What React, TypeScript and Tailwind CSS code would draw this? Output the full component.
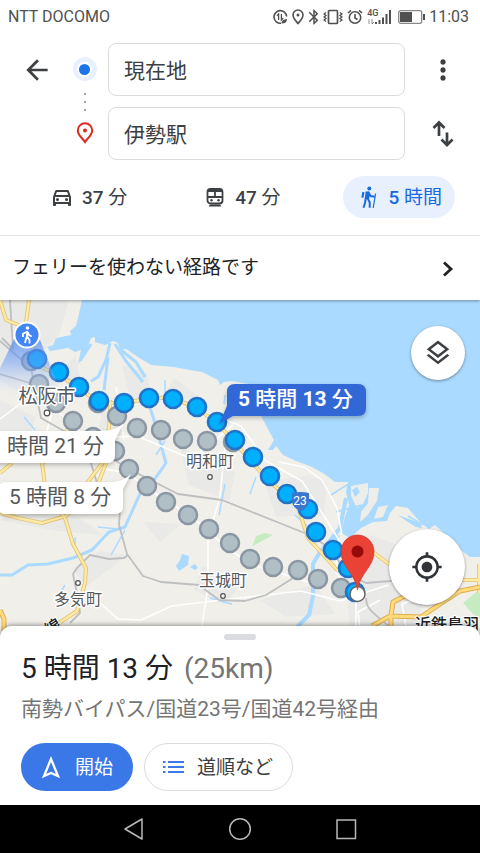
import type { ReactNode } from "react";
import { MdArrowBack, MdBluetooth, MdMoreVert, MdMyLocation, MdOutlineDirectionsCar, MdOutlineLayers } from "react-icons/md";

type Point = [number, number];

const mainRoute: Point[] = [
  [37, 359], [59, 372], [79, 387], [99, 401], [124, 403], [149, 398], [173, 399], [197, 407], [217, 422],
  [235, 440], [253, 457], [270, 476], [287, 494], [308, 509], [316, 532], [333, 550], [348, 568], [355, 592],
];

const otherRoutes: Point[] = [
  [31, 361], [39, 384], [56, 403], [73, 421], [93, 437], [98, 403], [117, 416], [137, 428], [161, 430], [183, 439],
  [207, 441], [233, 442], [115, 451], [129, 469], [147, 486], [166, 502], [188, 515], [209, 529], [230, 543],
  [250, 559], [273, 567], [298, 570], [318, 579], [341, 588],
];

function StatusBar() {
  return (
    <div className="flex h-8 items-center justify-between pl-2 pr-[11px] pt-px text-[#505050]">
      <span className="text-[16px] leading-5">NTT DOCOMO</span>
      <div className="flex items-center">
        <svg className="mr-1 h-4 w-[15px]" viewBox="0 0 15 16" fill="none" stroke="currentColor" strokeWidth="1.6">
          <path d="M13.6 7.5A6.3 6.3 0 1 0 8 14.2" />
          <path d="M5.600 11V5L4 6.600M8.400 5v6l1.700-1.700" strokeWidth="1.300" />
          <path d="M8.500 14.500c0-3 2-4 5.500-4.500 0 3-2 4.500-5.500 4.500z" fill="currentColor" stroke="none" />
        </svg>
        <svg className="mr-px h-4 w-3" viewBox="0 0 12 16" fill="none" stroke="currentColor" strokeWidth="1.600">
          <path d="M6 14.500C3.500 11.500 1 9 1 6a5 5 0 0 1 10 0c0 3-2.500 5.500-5 8.500z" />
          <circle cx="6" cy="6" r="1.500" fill="currentColor" stroke="none" />
        </svg>
        <MdBluetooth className="size-[18px]" />
        <svg className="mr-1 h-4 w-5" viewBox="0 0 20 16" fill="none" stroke="currentColor">
          <rect x="5.500" y="1.500" width="9" height="13" rx="1" strokeWidth="1.700" />
          <path d="M3 3.500L1 5l2 1.500L1 8l2 1.500L1 11l2 1.500M17 3.500L19 5l-2 1.500L19 8l-2 1.500 2 1.500-2 1.500" strokeWidth="1.300" />
        </svg>
        <svg className="mr-1 h-4 w-4" viewBox="0 0 16 16" fill="none" stroke="currentColor" strokeWidth="1.600">
          <circle cx="8" cy="8.500" r="5.700" />
          <path d="M8 5v4l2.500 1.500M1 4l3-2.700M15 4l-3-2.700" />
        </svg>
        <span className="relative mr-[7px] block h-4 w-6">
          <span className="absolute left-0 top-0 text-[9px] font-medium leading-[8px]">4G</span>
          <svg className="h-4 w-6" viewBox="0 0 24 16" stroke="currentColor" strokeWidth="2">
            <path d="M9 15v-2M12.500 15v-4M16 15V8.500M19.500 15V5M23 15V1" />
            <path d="M2 10v5M5 10v5l2-2" strokeWidth="1" fill="none" opacity=".6" />
          </svg>
        </span>
        <svg className="mr-1 h-[14px] w-[27px]" viewBox="0 0 27 14">
          <rect x=".7" y=".7" width="23" height="12.600" rx="2" fill="none" stroke="#888" strokeWidth="1.300" />
          <rect x="2" y="2" width="12" height="10" fill="currentColor" />
          <rect x="25" y="4" width="2" height="6" fill="currentColor" />
        </svg>
        <span className="text-[16px] leading-5">11:03</span>
      </div>
    </div>
  );
}

function TrainIcon() {
  return (
    <svg className="size-6" viewBox="0 0 24 24" fill="none" stroke="currentColor" strokeWidth="1.800">
      <rect x="4.500" y="4" width="15" height="14.500" rx="3" />
      <path d="M4.500 6C6.500 2.300 17.500 2.300 19.500 6v1h-15zM7 19.500h10l1.500 2h-13z" fill="currentColor" stroke="none" />
      <path d="M5 12h14M12 6v6" />
      <circle cx="8.500" cy="15.200" r="1.200" fill="currentColor" stroke="none" />
      <circle cx="15.500" cy="15.200" r="1.200" fill="currentColor" stroke="none" />
    </svg>
  );
}

function HikerIcon() {
  return (
    <svg className="size-6" viewBox="0 0 24 24" fill="none" stroke="currentColor" strokeWidth="2">
      <circle cx="13.300" cy="3.400" r="2" fill="currentColor" stroke="none" />
      <path d="M6.300 7l2.200.3-1 5.500-2.200-.4zM9.700 6.500l3.300-.2 1 3-1 5-4.300-.3z" fill="currentColor" stroke="none" />
      <path d="M12.500 7.500l2 3.500 4.300.800M9.800 13l-.8 5-1.500 4.800M11.500 13l2.200 4.200v5.600" />
      <path d="M19.600 8.500L17.200 23" strokeWidth="1.200" />
    </svg>
  );
}

function ModeButton({ icon, value, unit, active = false }: { icon: ReactNode; value: string; unit: string; active?: boolean }) {
  return (
    <button
      type="button"
      aria-pressed={active}
      className={`flex h-[42px] items-center gap-2 whitespace-pre rounded-full px-[13px] text-[19px] leading-6 ${active ? "bg-[#e8f0fe] text-[#1a6ae0]" : "text-[#3c4043]"}`}
    >
      {icon}
      <span className="pt-[2px]"><span className="font-medium">{value}</span> {unit}</span>
    </button>
  );
}

function Header() {
  const field = "h-[53px] w-full rounded-lg border border-[#dadce0] bg-white px-[15px] pb-[2px] text-[21px] text-[#3c4043] outline-none";
  return (
    <header className="relative z-10 bg-white shadow-[0_1px_3px_rgba(0,0,0,0.35)]">
      <StatusBar />
      <div className="flex pl-[13px] pt-[11px]">
        <button type="button" aria-label="戻る" className="flex h-[53px] w-12 shrink-0 items-center justify-center text-[#3c4043]">
          <MdArrowBack className="size-8" />
        </button>
        <div className="flex h-[117px] w-[47px] shrink-0 flex-col items-center justify-between pb-4 pt-[14px]">
          <span className="flex size-6 items-center justify-center rounded-full bg-[#e8f0fe]">
            <span className="size-[15px] rounded-full border-2 border-white bg-[#1a73e8]" />
          </span>
          <span className="flex flex-col gap-[6px]">
            <span className="size-[2px] rounded-full bg-[#80868b]" />
            <span className="size-[2px] rounded-full bg-[#80868b]" />
            <span className="size-[2px] rounded-full bg-[#80868b]" />
          </span>
          <svg className="h-[22px] w-[18px]" viewBox="0 0 18 22" fill="none" stroke="#df2920" strokeWidth="2">
            <path d="M9 20C7 16.500 1.800 13.500 1.800 8.500a7.200 7.200 0 0 1 14.400 0C16.200 13.500 11 16.500 9 20z" />
            <circle cx="9" cy="8.500" r="2" fill="#df2920" stroke="none" />
          </svg>
        </div>
        <div className="flex min-w-0 flex-1 flex-col gap-[11px]">
          <input aria-label="出発地" defaultValue="現在地" className={field} />
          <input aria-label="目的地" defaultValue="伊勢駅" className={field} />
        </div>
        <div className="flex w-[75px] shrink-0 flex-col items-center gap-[11px] text-[#3c4043]">
          <button type="button" aria-label="メニュー" className="flex h-[53px] items-center"><MdMoreVert className="size-8" /></button>
          <button type="button" aria-label="入れ替え" className="flex h-[53px] items-center">
            <svg className="size-7" viewBox="0 0 28 28" fill="none" stroke="currentColor" strokeWidth="2.700">
              <path d="M10 16V3M4.500 8L10 2.500 15.500 8M18 12.500V25M12.500 19.500L18 25l5.500-5.500" />
            </svg>
          </button>
        </div>
      </div>
      <div className="flex items-center justify-between border-b border-[#e4e5e7] pb-[17px] pl-[37px] pr-[25px] pt-4">
        <ModeButton icon={<MdOutlineDirectionsCar className="size-6" />} value="37" unit="分" />
        <ModeButton icon={<TrainIcon />} value="47" unit="分" />
        <ModeButton icon={<HikerIcon />} value="5" unit="時間" active />
      </div>
      <button type="button" className="flex h-16 w-full items-center justify-between pl-3 pr-[26px] pt-px text-left text-[19px] text-[#202124]">
        フェリーを使わない経路です
        <svg className="h-4 w-3" viewBox="0 0 12 16" fill="none" stroke="currentColor" strokeWidth="2.800"><path d="M2 1.500L9 8l-7 6.500" /></svg>
      </button>
    </header>
  );
}

function MapDrawing() {
  return (
    <svg className="absolute inset-0 h-full w-full" viewBox="0 300 480 338" preserveAspectRatio="xMidYMin slice" role="img" aria-label="地図">
      <defs>
        <linearGradient id="beam" x1="0" y1="0" x2="0" y2="1">
          <stop offset="0" stopColor="#4285f4" stopOpacity=".75" />
          <stop offset=".45" stopColor="#6c9df5" stopOpacity=".5" />
          <stop offset="1" stopColor="#dfe8fa" stopOpacity="0" />
        </linearGradient>
        <filter id="shade" x="-10%" y="-20%" width="120%" height="160%">
          <feDropShadow dx="0" dy="2" stdDeviation="2" floodOpacity=".25" />
        </filter>
      </defs>
      <rect y="300" width="480" height="338" fill="#aadaff" />
      <path
        fill="#f0efea"
        d="M0 300H82L79 314 76 326 70 331 71 335 56 338 53 345 47 347 50 351 68 348 75 352 81 350 78 364 85 354 91 338 95 337 95 342 105 345 113 341 118 343 120 350 126 349 138 357 151 365 174 367 190 370 202 372 218 380 220 385 224 382 232 381 248 384 261 416 269 431 274 440 268 450 273 450 276 446 283 455 296 461 310 466 323 473 335 482 348 482 346 492 349 505 344 520 341 533 350 538 361 528 373 522 387 521 390 513 396 506 408 508 420 522 429 529 435 525 448 537 461 550 470 557 480 557V638H0z"
      />
      <g fill="#ededea">
        <path d="M351 486L368 483 368 493 363 504 357 508 351 496z" />
        <path d="M369 488L379 488 377 501 367 516 360 522 361 512 368 503z" />
        <path d="M378 507L388 505 383 517 374 519z" />
      </g>
      <path fill="#aadaff" d="M352 490l5-3 3 5-5 5zM398 515l22 8 2 5-6-1-8-5zM393 498l3 2-1 2zM180 560l2-6 7 2-1 9-6 4-3 2-3-5zM190 567l5-3 3 4-3 2z" />
      <g fill="#e7e7e7" opacity=".75">
        <path d="M0 300h69l-10 35-21 20-6 45-32-20zM61 368l15-12 4 22-12 16zM122 365l25 8 4 25-20 4zM174 378l31 23-41-4zM104 402l22 12-10 22-17-8zM0 520l48-25 55 40-46-4zM73 570l27-19 28 4-41 31zM180 447l55 25-6 29-40-16zM264 481l45-5 9 38-42 3zM309 475l18 8-3 34-9-3zM345 550l27-15 52 20-4 80h-70zM143 522l38 2-21 18zM202 566l38 19-16 20-30-15zM0 400l35 17-9 35H0zM260 600l55-16 20 30-49 3z" />
      </g>
      <path fill="#c5ecc0" d="M252 547l4-11 9-3 8 2-11 6-11 6zM463 603l17-14v29l-7-4z" />
      <g fill="none" stroke="#aadaff" strokeLinejoin="round">
        <path d="M110 343L106 360 98 377 91 381M108 357L104 390M91 344L80 361M115 344L126 361 143 382M121 350L136 362 145 377M147 398L158 433 162 449 166 463 154 480 143 487 125 527 109 532 92 550 73 558 48 564 28 565 12 575 0 575" strokeWidth="3" />
        <path d="M346 498l-6 30-12 15-8 9-7 12 0 32-4 19-12 12M338 535l-8 13" strokeWidth="4" />
        <path d="M165 380v17M24 417L35 430M225 484l-6 31M256 477l-6 17M165 441l-9 14M98 527l20 2M125 530l-14 25M75 545v-8M65 585l-5 8M350 483l-19 12M361 505l-25 7M408 516l15 9M295 515l20 18M210 598l22 6M225 395l-1 9" strokeWidth="1.500" />
      </g>
      <g fill="none" stroke="#fff" strokeWidth="1.500" strokeLinejoin="round">
        <path d="M0 419l20-15 26-3 40 36M39 390l14 18-9 34M90 438l47-2 55 23 41-34M98 468l31 5 17 15 28 17 28 20 26 24 25 16 30 9 40 13M116 387l8 52M197 409l44 17 25 35 36 20 37 59-3 33 18 20M225 447l-5 49-12 44 0 47-8 51M100 603l18 16 23 1 31-14 50-6 43-5 36-4 39 10 48-16M279 462l25 5 18 13 15 28 5 27M356 591v46M380 600l-22 12 3 25M408 638l-6-34 29-11" />
      </g>
      <g fill="none" stroke="#bebfc0" strokeWidth="1.800" strokeLinejoin="round">
        <path d="M10 300l3 49L2 338M0 341l31 27 10 50 60 34 30 18 47 24 44 6 55 22 35 14 20 14 14 23 20 10 24-2 45-7M90 460l7 23M120 510l-1 15 8 29 16 22 18 6 38 3 20 15 26 1 21-6 24-15 14-10M128 555l-4 3-15 1-19-4-13 13-4 6 6 30 1 9-10 10M0 374l40 12M366 598c0 15 15 18 28 34l8 4" />
      </g>
      <g fill="none" strokeLinejoin="round">
        <g stroke="#e2c477" strokeWidth="4">
          <path d="M29 300l-4 30 16 37 22 10 38 27 25-2 42-5 28 10 23 18 47 53 32 29 10 31 30 33M0 300l6 20 23 9M110 400v18l-4 35M76 418l-18 25-15 20M103 462l-22 29M42 463l4 30 19 25 8 26 13 24-1 15-8 28-27 18M0 513l18 5 24 5 24-7 30-27 10-26M0 473l12-10M373 552l20 15 9 4 16 9h62M479 564v29" />
        </g>
        <g stroke="#ffeaa5" strokeWidth="2.300">
          <path d="M29 300l-4 30 16 37 22 10 38 27 25-2 42-5 28 10 23 18 47 53 32 29 10 31 30 33M0 300l6 20 23 9M110 400v18l-4 35M76 418l-18 25-15 20M103 462l-22 29M42 463l4 30 19 25 8 26 13 24-1 15-8 28-27 18M0 513l18 5 24 5 24-7 30-27 10-26M0 473l12-10M373 552l20 15 9 4 16 9h62M479 564v29" />
        </g>
        <path d="M0 610l4 9 0 19M372 626l18-10 31 1 19-13 20-13 20-4M391 637v-22l2-13 20-10" stroke="#e1ad53" strokeWidth="5" />
        <path d="M0 610l4 9 0 19M372 626l18-10 31 1 19-13 20-13 20-4M391 637v-22l2-13 20-10" stroke="#ffdb79" strokeWidth="3" />
      </g>
      <g fill="#b0bec5" stroke="#8b96a3" strokeWidth="2.500">
        {otherRoutes.map(([x, y]) => <circle key={`${x}-${y}`} cx={x} cy={y} r="9" />)}
      </g>
      <g fill="#00b0ff" stroke="#2173c7" strokeWidth="2.700">
        {mainRoute.map(([x, y]) => <circle key={`${x}-${y}`} cx={x} cy={y} r="9" />)}
      </g>
      <path d="M292 493q8-2 17 0v9q-1 6-8 9-8-3-9-9z" fill="#3b77cc" />
      <text x="300" y="505" textAnchor="middle" fontSize="12" fill="#fff">23</text>

      <path d="M16 335L-8 385Q28 410 58 385L38 335z" fill="url(#beam)" />
      <circle cx="27" cy="335" r="12.500" fill="#4285f4" stroke="#fff" strokeWidth="2" />
      <g fill="none" stroke="#fff" strokeWidth="2" strokeLinejoin="round">
        <circle cx="27.500" cy="328" r="1.800" fill="#fff" stroke="none" />
        <path d="M27 331v6.500M26.500 332l-3.500 1.800V337M27.500 332l1.500 3 2.800 1.500M26.500 337L25 343M27.500 337l2 3v3.500" strokeWidth="1.800" />
      </g>

      <g fill="#55585b" stroke="#fff" strokeWidth="3" strokeLinejoin="round" paintOrder="stroke" textAnchor="middle">
        <text x="47" y="403" fontSize="19">松阪市</text>
        <g fontSize="16">
          <text x="210" y="467">明和町</text>
          <text x="223" y="586">玉城町</text>
          <text x="78" y="605">多気町</text>
        </g>
      </g>
      <g fill="#fff" stroke="#505050" strokeWidth="1.200">
        <circle cx="47" cy="413" r="2.800" /><circle cx="210" cy="477" r="2.300" />
        <circle cx="223" cy="596" r="2.300" /><circle cx="78" cy="583" r="2.300" />
      </g>
      <g fill="#202124" stroke="#fff" strokeWidth="2" paintOrder="stroke" fontSize="16" fontWeight="500">
        <text x="415" y="630">近鉄鳥羽</text>
        <text transform="translate(49 636) rotate(-32)">線</text>
      </g>

      <g fill="#fff" filter="url(#shade)">
        <path d="M-10 431H103Q116 430 123 424 119 431 115 440V455Q115 463 107 463H-10z" />
        <path d="M6 482H113Q124 481 131 474 127 481 123 489V506Q123 514 115 514H6Q-2 514-2 506V490Q-2 482 6 482z" />
      </g>
      <g fontSize="21" fill="#55585b">
        <text x="7" y="453">時間 21 分</text>
        <text x="9" y="504">5 時間 8 分</text>
      </g>
      <path filter="url(#shade)" fill="#3367d6" d="M235 384H358Q366 384 366 392V408Q366 416 358 416H233L219 424 227 406V392Q227 384 235 384z" />
      <text x="238" y="406" fontSize="21" fontWeight="700" fill="#fff">5 <tspan fontWeight="500">時間</tspan> 13 <tspan fontWeight="500">分</tspan></text>

      <circle cx="357.500" cy="594" r="7.500" fill="#fff" stroke="#666" strokeWidth="1.500" />
      <path d="M357.500 590C355 573 341 567 341 551.500a16.500 16.500 0 0 1 33 0C374 567 360 573 357.500 590z" fill="#ea4335" stroke="#ce3a2e" strokeWidth=".7" />
      <circle cx="357.500" cy="551.500" r="6" fill="#960a0a" />
    </svg>
  );
}

function RouteMap() {
  return (
    <main className="relative min-h-[338px] flex-1 overflow-hidden">
      <MapDrawing />
      <button type="button" aria-label="レイヤ" className="absolute right-[15px] top-[26px] flex size-[54px] items-center justify-center rounded-full bg-white text-[#3c4043] shadow-[0_1px_3px_rgba(0,0,0,0.4)]">
        <MdOutlineLayers className="size-[30px]" />
      </button>
      <button type="button" aria-label="現在地を表示" className="absolute bottom-[33px] right-[15px] flex size-[76px] items-center justify-center rounded-full bg-white text-[#303438] shadow-[0_1px_3px_rgba(0,0,0,0.4)]">
        <MdMyLocation className="size-8" />
      </button>
    </main>
  );
}

function RouteSheet() {
  return (
    <section className="relative z-10 -mt-3 rounded-t-xl bg-white px-[21px] pb-[14px] pt-2 shadow-[0_-1px_5px_rgba(0,0,0,0.4)]">
      <div className="mx-auto h-[6px] w-8 rounded-full bg-[#dadce0]" />
      <h1 className="mt-2 whitespace-pre text-[28px] leading-[42px] text-[#202124]">
        5 時間 13 分 <span className="pl-1 text-[#757575]">(25km)</span>
      </h1>
      <p className="mt-[3px] text-[21px] leading-8 text-[#757575]">南勢バイパス/国道23号/国道42号経由</p>
      <div className="mt-[18px] flex gap-[11px] text-[19px]">
        <button type="button" className="flex h-12 w-28 items-center rounded-full bg-[#3b78e7] pl-[18px] text-white">
          <svg className="mr-3 size-6" viewBox="0 0 24 24" fill="none" stroke="currentColor" strokeWidth="2.300"><path d="M12 4L5 21l7-3 7 3z" /></svg>
          <span className="pt-[2px]">開始</span>
        </button>
        <button type="button" className="flex h-12 w-[149px] items-center rounded-full border border-[#dadce0] pl-[18px] text-[#3c4043]">
          <svg className="mr-3 h-[14px] w-[22px]" viewBox="0 0 22 14" fill="none" stroke="#3b78e7" strokeWidth="2"><path d="M0 2h2.500M0 7h2.500M0 12h2.500M5 2h16M5 7h16M5 12h16" /></svg>
          <span className="pt-[2px]">道順など</span>
        </button>
      </div>
    </section>
  );
}

function NavigationBar() {
  return (
    <nav className="relative z-10 flex h-12 items-center justify-center gap-[82px] bg-black text-[#b8b8b8]">
      <button type="button" aria-label="戻る"><svg className="size-6" viewBox="0 0 24 24" fill="none" stroke="currentColor" strokeWidth="1.500"><path d="M20 2L3 12l17 10z" strokeLinejoin="round" /></svg></button>
      <button type="button" aria-label="ホーム"><svg className="size-6" viewBox="0 0 24 24" fill="none" stroke="currentColor" strokeWidth="1.500"><circle cx="12" cy="12" r="10.300" /></svg></button>
      <button type="button" aria-label="アプリ一覧"><svg className="size-6" viewBox="0 0 24 24" fill="none" stroke="currentColor" strokeWidth="1.500"><rect x="3" y="3" width="18.500" height="18.500" /></svg></button>
    </nav>
  );
}

export default function App() {
  return (
    <div className="flex min-h-screen flex-col bg-white font-['Roboto','Noto_Sans_CJK_JP',sans-serif]" lang="ja">
      <Header />
      <RouteMap />
      <RouteSheet />
      <NavigationBar />
    </div>
  );
}
